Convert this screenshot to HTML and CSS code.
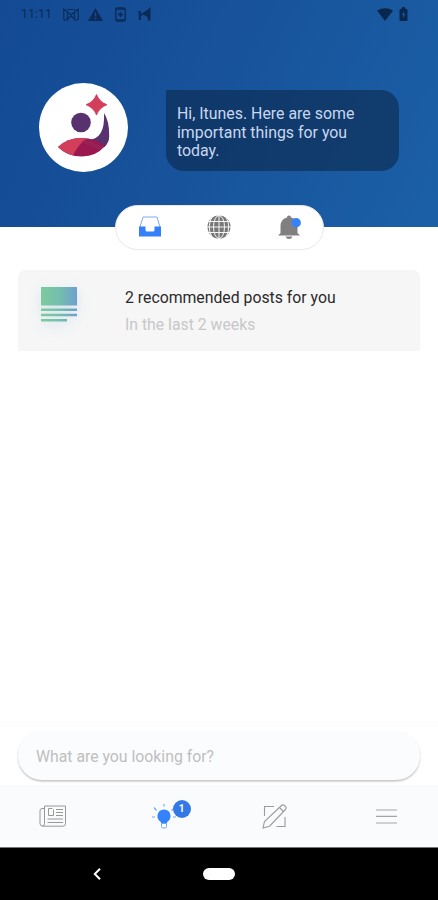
FILE: index.html
```html
<!DOCTYPE html>
<html lang="en">
<head>
<meta charset="utf-8">
<title>Assistant</title>
<link rel="stylesheet" href="styles.css">
</head>
<body>
<div class="screen">
  <header class="hero">
    <div class="status">
      <span class="time">11:11</span>
      <svg class="s-mail" width="16" height="13" viewBox="0 0 16 13"><path d="M.8 12V1L8 7l7.200-6v11M1 12h3.500V5M15 12h-3.500V5M4 1.500h8M4.500 11 8 8l3.500 3" fill="none" stroke="currentColor" stroke-width="1.100"/></svg>
      <svg class="s-warn" width="15" height="13" viewBox="0 0 15 13"><path fill="currentColor" fill-rule="evenodd" d="M7.500 0 15 13H0ZM6.800 4.500v4h1.400v-4ZM6.800 9.800v1.500h1.400V9.800Z"/></svg>
      <svg class="s-phone" width="11" height="15" viewBox="0 0 11 15"><rect x=".8" y=".8" width="9.400" height="13.400" rx="1.500" fill="none" stroke="currentColor" stroke-width="1.300"/><path d="M1 2h9M1 13h9" stroke="currentColor" stroke-width="1.600"/><path d="M5.500 5v5M3 7.500h5" stroke="currentColor" stroke-width="1.500"/></svg>
      <svg class="s-n" width="13" height="14" viewBox="0 0 13 14"><path d="M0 4.500 3 4v9H.8V6.500ZM3 7l7-4.500L12.500 0v13.500H10L9.500 10 5 7.500 3 9Z" fill="currentColor"/></svg>
      <svg class="s-wifi" width="16" height="13" viewBox="0 0 16 13"><path d="M0 2.600Q8-2.300 16 2.600L8 13Z" fill="currentColor"/></svg>
      <svg class="s-bat" width="9" height="14" viewBox="0 0 9 14"><path d="M3 0h3v1.300l2.500 1.500V13q0 1-1 1h-6q-1 0-1-1V2.800L3 1.300ZM5 4 3 8h1.300v3.500L6.200 7H5Z" fill="currentColor" fill-rule="evenodd"/></svg>
    </div>
    <div class="greeting">
      <div class="avatar">
        <svg width="88" height="88" viewBox="0 0 88 88">
          <path d="M57.500 11.500Q60.500 19 68 21.700 60.500 24.500 57.500 32 54.500 24.500 47 21.700 54.500 19 57.500 11.500Z" fill="#d33f5b" stroke="#d33f5b" stroke-width=".8"/>
          <circle cx="42" cy="39.500" r="9.800" fill="#57326f"/>
          <path d="M65 30Q70.500 38 70.200 53.500 70 60 65.500 64L47 57Q66.500 58 65 30Z" fill="#57326f"/>
          <path d="M19 64Q28 55 43 55 56 55 66 63 57 73.500 43 73.500 28 73.500 19 64Z" fill="#9b174f"/>
          <path d="M19 64Q28 55 43 55L48 56Q40 60 34 72.500 25 70 19 64Z" fill="#d33f5b"/>
          <path d="M47 56Q54 60 65.500 64L60 67 50 62 42 60Q44 57 47 56Z" fill="#97265c" opacity=".65"/>
        </svg>
      </div>
      <p class="bubble">Hi, Itunes. Here are some important things for you today.</p>
    </div>
  </header>

  <nav class="tabs">
    <svg width="22" height="21" viewBox="0 0 22 21"><path d="M1 11 4 1h14l3 10" fill="none" stroke="#7caafa" stroke-width="1"/><path d="M0 10.500h6.500V14q0 1.500 1.500 1.500h6q1.500 0 1.500-1.500v-3.500H22v10H0Z" fill="#3380f8"/></svg>
    <svg width="24" height="24" viewBox="0 0 24 24"><circle cx="12" cy="12" r="11.500" fill="#777"/><g fill="none" stroke="#f5f5f5" stroke-width="1"><path d="M12 0v24M0 12h24M2 6.500h20M2 17.500h20"/><ellipse cx="12" cy="12" rx="5.500" ry="11.500"/><path d="M5 2Q-.5 12 5 22M19 2q5.500 10 0 20"/></g></svg>
    <svg width="24" height="24" viewBox="0 0 24 24"><path d="M1 20.500 3.500 18V10.500Q4 4 10 2.500 10 .5 12 .5T14 2.500Q20.500 4 20.500 10.500V18L23 20.500Z" fill="#808080"/><path d="M8.500 21.500h7Q14.500 24 12 24T8.500 21.500Z" fill="#808080"/><circle cx="19.200" cy="7.800" r="4.700" fill="#3483fa"/></svg>
  </nav>

  <main class="feed">
    <article class="card">
      <svg class="post" width="36" height="35" viewBox="0 0 36 35"><defs><linearGradient id="g" x1="0" y1="0" x2="1" y2="0"><stop offset="0" stop-color="#7ccb9d"/><stop offset=".5" stop-color="#75bfad"/><stop offset="1" stop-color="#6e9fcf"/></linearGradient></defs><path d="M0 0h36v18.500H0ZM0 21.500h36v2.500H0ZM0 26.800h36v2.400H0ZM0 32h26v2.400H0Z" fill="url(#g)"/></svg>
      <div>
        <h2>2 recommended posts for you</h2>
        <p>In the last 2 weeks</p>
      </div>
    </article>
  </main>

  <div class="search"><div class="field">What are you looking for?</div></div>

  <nav class="bottom">
    <div class="item"><svg width="28" height="22" viewBox="0 0 28 22" fill="none" stroke="#989898" stroke-width="1"><path d="M5.500 3.500H3Q1 3.500 1 6v12.500Q1 21.200 4 21.200h20q2.500 0 2.500-2.500V1H5.500v17.500Q5.500 21 3.500 21M13.500 3.500h-4v7h5v-6M17 4.500h7M17 7.500h7M17 10.500h7M8.500 14h15.500M8.500 17.500h15.500"/></svg></div>
    <div class="item"><span class="bulb"><svg width="26" height="26" viewBox="0 0 26 26"><circle cx="13" cy="13" r="6.600" fill="#3483fa"/><path d="M9 16h8l-1.200 4.500h-5.600Z" fill="#3483fa"/><path d="M10.500 20.500v3q0 1.500 1.500 1.500h2q1.500 0 1.500-1.500v-3Z" fill="#fff" stroke="#74a7fa" stroke-width="1"/><path d="M1 14h3M22 14h3M3 4.500l2.500 3M13 1v2.500M22 6l-1.500 1.500" stroke="#74a7fa" stroke-width="1.200"/></svg><b class="badge">1</b></span></div>
    <div class="item"><svg width="26" height="26" viewBox="0 0 26 26" fill="none" stroke="#9b9b9b" stroke-width="1.100"><path d="M12 3.500H2.500V13M14.500 23.500h8.500V14M1 25l1.500-6.500L19.500 2.500Q21 1 23 3q2 2 .5 3.500L7.500 23.200Z"/><path d="M17.500 4.500l4 4"/></svg></div>
    <div class="item"><svg width="21" height="15" viewBox="0 0 21 15"><path d="M0 1h21M0 7.300h21M0 14h21" stroke="#a5a5a5" stroke-width="1.200"/></svg></div>
  </nav>

  <footer class="system">
    <svg width="8" height="12" viewBox="0 0 8 12"><path d="M7 .8 1.800 6 7 11.200" fill="none" stroke="#fff" stroke-width="2"/></svg>
    <span class="home"></span>
    <span class="spacer"></span>
  </footer>
</div>
</body>
</html>
```
FILE: styles.css
```css
* { box-sizing: border-box; }
body { margin: 0; background: #fff; font-family: Roboto, sans-serif; }
h2, p { margin: 0; font-weight: 400; }
svg { display: block; flex: none; }
.screen { height: 900px; display: flex; flex-direction: column; overflow: hidden; }

.hero { height: 227px; flex: none; background: linear-gradient(115deg, #134a93 0%, #17529a 45%, #1b60a7 100%); }
.status { height: 28px; display: flex; align-items: center; padding: 0 30px 0 21px; color: #0b2a56; }
.time { width: 30px; font-size: 12.5px; line-height: 28px; white-space: nowrap; }
.s-mail { margin-left: 12px; }
.s-warn { margin-left: 9px; }
.s-phone { margin-left: 12px; }
.s-n { margin-left: 12px; }
.s-wifi { margin-left: auto; color: #08264e; }
.s-bat { margin-left: 6px; color: #08264e; }
.greeting { display: flex; align-items: flex-start; padding: 55px 39px 0; }
.avatar { width: 89px; height: 89px; flex: none; border-radius: 50%; background: #fff; }
.bubble { width: 233px; height: 81px; margin: 7px 0 0 38px; padding: 15px 30px 0 11px; border-radius: 0 18px 18px 18px; background: rgba(12, 40, 75, .6); color: #c9d7ee; font-size: 15.9px; line-height: 18.6px; }

.tabs { width: 209px; height: 45px; flex: none; margin: -22px 0 0 115px; padding: 0 22px 2px 23px; border: 1px solid #e8e8ea; border-radius: 23px; background: #fff; display: flex; align-items: center; justify-content: space-between; position: relative; }

.feed { flex: 1; padding: 20px 18px 0; }
.card { height: 81px; display: flex; align-items: flex-start; gap: 48px; padding: 17px 0 0 23px; border-radius: 7px 7px 2px 2px; background: #f6f6f6; }
.post { filter: drop-shadow(0 5px 7px rgba(90, 160, 200, .2)); }
.card h2 { font-size: 15.8px; line-height: 21px; color: #2a2a2a; }
.card p { margin-top: 6px; font-size: 15.8px; line-height: 21px; color: #c8c8c8; }

.search { height: 63px; flex: none; padding: 8px 18px 0; border-top: 1px solid #fafafa; }
.field { height: 49px; padding-left: 18px; border-radius: 24px; background: #fafcfd; box-shadow: 0 1.5px 2px rgba(0, 0, 0, .24); color: #bfbfbf; font-size: 15.8px; line-height: 52px; }
.bottom { height: 62px; flex: none; background: #fafbfd; display: grid; grid-template-columns: 106px 115px 108px 115px; align-items: center; }
.item { display: flex; justify-content: center; }
.bulb { position: relative; }
.badge { position: absolute; left: 22px; top: -3px; width: 18px; height: 18px; border-radius: 50%; background: #3478e8; color: #fff; font-size: 10px; line-height: 18px; text-align: center; }
.system { height: 53px; flex: none; background: #000; border-top: 1px solid #777; display: flex; align-items: center; justify-content: space-between; padding: 0 93px; }
.home { width: 32px; height: 12px; border-radius: 6px; background: #fff; }
.spacer { width: 8px; }
```
